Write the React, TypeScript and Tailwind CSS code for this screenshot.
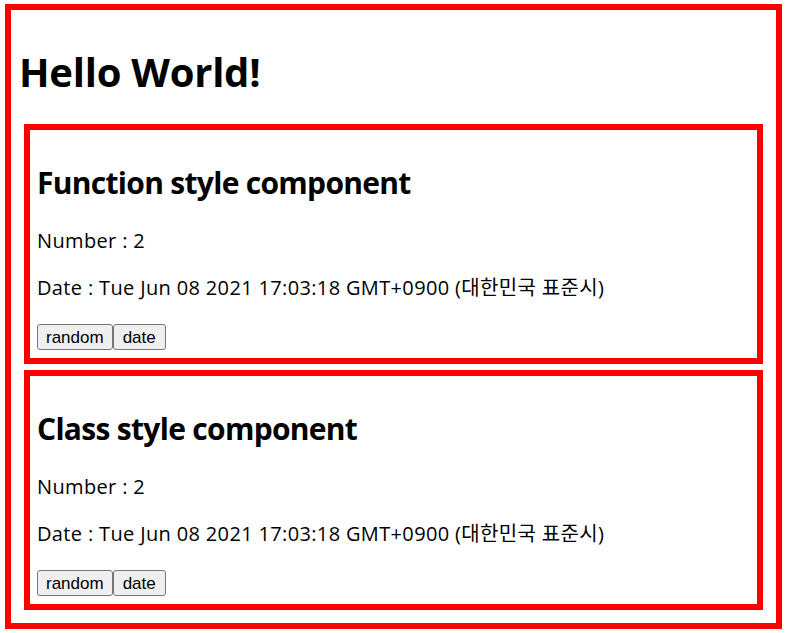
import { FC } from "react";

const DATE_TEXT = "Tue Jun 08 2021 17:03:18 GMT+0900 (대한민국 표준시)";

const Panel: FC<{ title: string }> = ({ title }) => {
  return (
    <div className="mx-[13px] border-[6px] border-[#ff0000] px-[7px] pb-[8px]">
      <h2 className="mt-[35px] text-[30px] leading-[36px] font-bold tracking-[-0.7px]">{title}</h2>
      <p className="mt-[28px] text-[20px] leading-[24px] tracking-[0.35px]">Number : 2</p>
      <p className="mt-[23px] text-[20px] leading-[24px] tracking-[0.35px]">Date : {DATE_TEXT}</p>
      <div className="mt-[24px] flex flex-row">
        <button className="h-[26px] px-[8px] bg-[#efefef] border border-[#767676] rounded-[3px] text-[17px] font-['Liberation_Sans',sans-serif] text-black">
          random
        </button>
        <button className="h-[26px] px-[9px] bg-[#efefef] border border-[#767676] rounded-[3px] text-[17px] font-['Liberation_Sans',sans-serif] text-black">
          date
        </button>
      </div>
    </div>
  );
};

export default function App() {
  return (
    <div className="bg-white font-['Open_Sans','Noto_Sans_CJK_KR',sans-serif] text-black">
      <div className="mt-[4px] mx-[5px] mb-[5px] border-[6px] border-[#ff0000] pb-[13px]">
        <h1 className="mt-[38px] mb-[28px] ml-[8px] text-[40px] leading-[48px] font-bold tracking-[-0.25px]">
          Hello World!
        </h1>
        <div className="flex flex-col gap-[6px]">
          <Panel title="Function style component" />
          <Panel title="Class style component" />
        </div>
      </div>
    </div>
  );
}
